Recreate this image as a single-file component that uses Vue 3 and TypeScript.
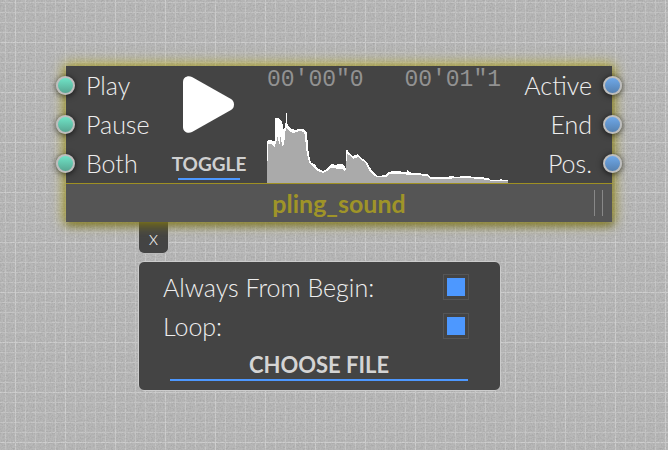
<script setup lang="ts">
import { ref } from 'vue'

interface Option {
  id: string
  label: string
}

const inputs: string[] = ['Play', 'Pause', 'Both']
const outputs: string[] = ['Active', 'End', 'Pos.']
const options: Option[] = [
  { id: 'from-begin', label: 'Always From Begin:' },
  { id: 'loop', label: 'Loop:' },
]

const enabled = ref<Record<string, boolean>>({ 'from-begin': true, loop: true })
const playing = ref(false)
const panelOpen = ref(true)
const position = ref(`00'00"0`)
const duration = ref(`00'01"1`)

// Peak envelope of the sample: [x, y] pairs, y measured from the top.
const peaks: string =
  '0,28 2,27 8,28 8,5 11,5 15,9 16,12 17,20 18,10 19,10 19,0 20,0 20,10 22,14 25,16 28,17 31,16 36,16 38,18 39,19 40,20 41,34 42,42 44,50 48,51 50,55 56,58 60,56 62,53 65,51 68,52 71,51 75,51 78,54 79,56 79,37 81,37 81,39 86,43 91,41 93,44 96,46 100,49 102,53 106,59 111,63 119,62 121,59 126,58 131,58 136,59 140,59 140,57 142,59 146,60 151,60 157,61 161,61 163,64 173,64 180,64 184,63 190,64 196,63 201,63 206,64 213,64 221,65 223,67 232,67 234,66 236,67 241,67'

// Average level drawn inside the peaks.
const average: string =
  '0,48 1,48 1,31 5,31 7,34 8,34 9,28 10,28 10,24 11,24 12,31 13,31 13,24 14,24 15,33 17,32 18,22 19,15 21,16 23,19 26,20 32,18 37,19 38,23 39,35 41,45 43,51 46,53 49,57 53,59 56,60 60,58 63,55 66,55 71,56 75,56 78,58 79,56 80,41 82,42 86,46 91,44 96,48 99,51 102,57 106,62 110,64 119,64 122,61 128,61 135,61 142,62 150,62 160,63 163,66 180,66 190,65 201,65 213,66 221,67 224,68 241,68'
</script>

<template>
  <main class="canvas">
    <svg class="grain" aria-hidden="true">
      <filter id="grain-noise">
        <feTurbulence type="fractalNoise" baseFrequency="0.6" numOctaves="2" />
        <feColorMatrix values="0 0 0 0 0  0 0 0 0 0  0 0 0 0 0  1 0 0 0 -0.4" />
      </filter>
      <rect width="100%" height="100%" filter="url(#grain-noise)" />
    </svg>

    <section class="node">
      <div class="body">
        <ul class="ports inputs">
          <li v-for="name in inputs" :key="name">
            <span class="port"></span>{{ name }}
          </li>
        </ul>

        <div class="transport">
          <svg class="play" viewBox="0 0 52 58" aria-hidden="true">
            <path d="M0 6C0 1 5-1 9 1L48 23Q51 25 51 28.500Q51 32 48 34L9 56C5 58 0 56 0 51Z" />
          </svg>
          <button class="toggle" type="button" @click="playing = !playing">TOGGLE</button>
        </div>

        <div class="wave">
          <div class="times">
            <time>{{ position }}</time>
            <time>{{ duration }}</time>
          </div>
          <svg viewBox="0 0 241 70" preserveAspectRatio="none" aria-hidden="true">
            <polygon class="peak" :points="`0,70 ${peaks} 241,70`" />
            <polygon class="average" :points="`0,70 ${average} 241,70`" />
          </svg>
        </div>

        <ul class="ports outputs">
          <li v-for="name in outputs" :key="name">
            {{ name }}<span class="port"></span>
          </li>
        </ul>
      </div>

      <footer class="title">
        <h1>pling_sound</h1>
        <span class="grip"></span>
      </footer>
    </section>

    <button class="close" type="button" @click="panelOpen = !panelOpen">x</button>

    <form v-if="panelOpen" class="panel" @submit.prevent>
      <div v-for="option in options" :key="option.id" class="option">
        <label :for="option.id">{{ option.label }}</label>
        <input :id="option.id" v-model="enabled[option.id]" type="checkbox" />
      </div>
      <button class="choose" type="button">CHOOSE FILE</button>
    </form>
  </main>
</template>

<style>
body {
  margin: 0;
}
</style>

<style scoped>
.canvas {
  position: relative;
  box-sizing: border-box;
  min-height: 100vh;
  padding: 66px 56px 60px 66px;
  background-color: #b8b8b8;
  background-image:
    linear-gradient(90deg, #cecece 1px, transparent 1px),
    linear-gradient(#cecece 1px, transparent 1px),
    linear-gradient(90deg, #c6c6c6 1px, transparent 1px),
    linear-gradient(#c6c6c6 1px, transparent 1px);
  background-size: 50px 50px, 50px 50px, 10px 10px, 10px 10px;
  background-position: 15px 0, 0 42px, 5px 0, 0 2px;
  color: #eee;
  font-family: Lato, "Open Sans", sans-serif;
  font-size: 25px;
  font-weight: 300;
}

.grain {
  position: absolute;
  inset: 0;
  width: 100%;
  height: 100%;
  opacity: 0.2;
}

button {
  padding: 0;
  border: 0;
  background: none;
  color: inherit;
  font: inherit;
  cursor: pointer;
}

.node {
  position: relative;
  z-index: 1;
  background: #444;
  box-shadow: 0 0 12px 2px rgba(190, 176, 30, 0.8), 1px 3px 8px rgba(0, 0, 0, 0.6);
}

.body {
  display: grid;
  grid-template-columns: 106px 74px minmax(0, 1fr) auto;
}

.ports {
  margin: 0;
  padding: 0;
  list-style: none;
}

.ports li {
  position: relative;
  padding: 0 20px;
  line-height: 39px;
  white-space: nowrap;
}

.outputs {
  text-align: right;
}

.port {
  position: absolute;
  top: 10px;
  left: -10px;
  box-sizing: border-box;
  width: 19px;
  height: 19px;
  border: 2px solid #bebebe;
  border-radius: 50%;
  background: linear-gradient(#6fe3c6, #58a692);
  box-shadow: 0 1px 6px rgba(0, 0, 0, 0.7);
}

.outputs .port {
  right: -10px;
  left: auto;
  background: linear-gradient(#6fa8e8, #5681b0);
}

.transport {
  display: flex;
  flex-direction: column;
  align-items: center;
  justify-content: space-between;
  padding: 10px 0 3px;
}

.play {
  width: 52px;
  height: 58px;
  fill: #fff;
}

.toggle {
  padding-bottom: 2px;
  background: linear-gradient(#4d98ff, #4d98ff) center bottom / 62px 2px no-repeat;
  color: #d0d0d0;
  font-size: 19px;
  font-weight: 700;
  line-height: 28px;
}

.wave {
  display: flex;
  flex-direction: column;
  justify-content: space-between;
  padding-left: 21px;
}

.wave svg {
  width: 241px;
  height: 70px;
  shape-rendering: crispEdges;
}

.peak {
  fill: #fff;
}

.average {
  fill: #aaa;
}

.times {
  display: flex;
  justify-content: space-between;
  width: 234px;
  color: #929292;
  font-family: "Liberation Mono", monospace;
  font-size: 23px;
  line-height: 28px;
}

.title {
  display: flex;
  align-items: center;
  height: 38px;
  border-top: 1px solid #9f9023;
  background: #555;
}

.title h1 {
  flex: 1;
  margin: 0 0 0 18px;
  color: #9f9428;
  font-size: 25px;
  font-weight: 700;
  line-height: 38px;
  text-align: center;
}

.grip {
  width: 7px;
  height: 26px;
  margin-right: 9px;
  border: solid #888;
  border-width: 0 1px;
}

.close {
  display: block;
  position: relative;
  width: 31px;
  height: 32px;
  margin-left: 72px;
  border: 1px solid #bbb;
  border-top: 0;
  border-radius: 0 0 6px 6px;
  background: #444;
  font-size: 20px;
  line-height: 31px;
}

.panel {
  display: flex;
  flex-direction: column;
  position: relative;
  box-sizing: border-box;
  max-width: 363px;
  margin: 7px 0 0 72px;
  padding: 5px 31px 9px 24px;
  border: 1px solid #ccc;
  border-radius: 6px;
  background: #444;
}

.option {
  display: flex;
  align-items: center;
  justify-content: space-between;
  height: 39px;
}

.option input {
  appearance: none;
  box-sizing: border-box;
  width: 26px;
  height: 26px;
  margin: 0;
  padding: 3px;
  border: 1px solid #555;
}

.option input:checked {
  background: #4d98ff content-box;
}

.choose {
  margin: 0 1px 0 7px;
  padding-top: 6px;
  border-bottom: 2px solid #4d98ff;
  color: #d4d4d4;
  font-size: 22px;
  font-weight: 700;
  line-height: 28px;
}
</style>
